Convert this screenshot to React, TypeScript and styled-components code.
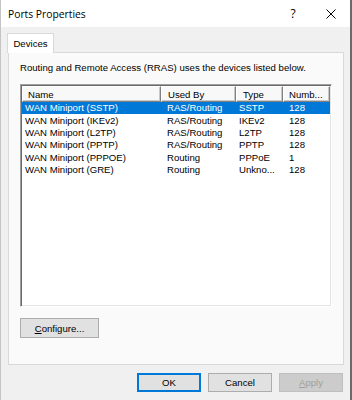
import React from "react";
import styled, { createGlobalStyle } from "styled-components";

const Global = createGlobalStyle`
  html, body { margin: 0; padding: 0; background: #f0f0f0; }
  * { box-sizing: border-box; }
`;

const Window = styled.div`
  width: 352px;
  height: 400px;
  background: #f0f0f0;
  display: flex;
  flex-direction: column;
  font-family: "Liberation Sans", Arial, sans-serif;
  font-size: 9.6px;
  color: #000;
  border-left: 1px solid #c4c4c4;
  border-right: 2px solid #6a6a6a;
  overflow: hidden;
`;

const TitleBar = styled.div`
  height: 27px;
  flex: none;
  background: #fff;
  display: flex;
  align-items: center;
  padding-left: 7px;
`;

const Title = styled.div`
  flex: 1;
  font-family: "Open Sans", "Noto Sans", sans-serif;
  font-size: 10.3px;
  color: #000;
`;

const TitleButton = styled.div`
  width: 38px;
  height: 27px;
  display: flex;
  align-items: center;
  justify-content: center;
  font-family: "Open Sans", "Noto Sans", sans-serif;
  font-size: 12px;
`;

const Body = styled.div`
  flex: 1;
  display: flex;
  flex-direction: column;
  padding: 6px 7px 0 6px;
`;

const TabStrip = styled.div`
  display: flex;
  height: 19px;
  position: relative;
  z-index: 1;
`;

const Tab = styled.div`
  width: 47px;
  height: 20px;
  background: #fff;
  border: 1px solid #d9d9d9;
  border-bottom: none;
  display: flex;
  align-items: center;
  justify-content: center;
  padding-bottom: 1px;
`;

const Panel = styled.div`
  margin-left: 1px;
  width: 336px;
  height: 313px;
  background: #fafafa;
  border: 1px solid #d9d9d9;
  display: flex;
  flex-direction: column;
  padding: 9px 0 0 11px;
`;

const Caption = styled.div`
  line-height: 12px;
  height: 12px;
`;

const ListView = styled.div`
  margin-top: 10px;
  width: 312px;
  height: 223px;
  background: #fff;
  border-top: 1px solid #a0a0a0;
  border-left: 1px solid #a0a0a0;
  border-right: 1px solid #fff;
  border-bottom: 1px solid #fff;
  box-shadow: inset 1px 1px 0 #696969, inset -1px -1px 0 #e3e3e3;
  padding: 1px;
  display: flex;
  flex-direction: column;
`;

const cols = "139px 75px 47px 47px";

const HeaderRow = styled.div`
  display: grid;
  grid-template-columns: ${cols};
  height: 16px;
`;

const HeaderCell = styled.div<{ $pad: number }>`
  background: #f8f8f8;
  border-top: 1px solid #fff;
  border-left: 1px solid #fff;
  border-right: 1px solid #808080;
  border-bottom: 1px solid #808080;
  box-shadow: inset -1px -1px 0 #c8c8c8;
  padding-left: ${(p) => p.$pad}px;
  display: flex;
  align-items: center;
  white-space: nowrap;
  overflow: hidden;
`;

const Row = styled.div<{ $selected?: boolean }>`
  display: grid;
  grid-template-columns: ${cols} 1fr;
  height: 12.4px;
  align-items: center;
  background: ${(p) => (p.$selected ? "#0078d7" : "transparent")};
  color: ${(p) => (p.$selected ? "#fff" : "#000")};
`;

const Cell = styled.div<{ $pad: number }>`
  padding-left: ${(p) => p.$pad}px;
  white-space: nowrap;
  overflow: hidden;
  line-height: 12px;
`;

const ConfigureButton = styled.div`
  margin-top: 11px;
  width: 79px;
  height: 20px;
  background: #e1e1e1;
  border: 1px solid #adadad;
  display: flex;
  align-items: center;
  justify-content: center;
`;

const Footer = styled.div`
  display: flex;
  justify-content: flex-end;
  gap: 7px;
  margin-top: 8px;
`;

const Button = styled.div<{ $default?: boolean; $disabled?: boolean }>`
  width: 64px;
  height: 19px;
  display: flex;
  align-items: center;
  justify-content: center;
  background: ${(p) => (p.$disabled ? "#cccccc" : "#e1e1e1")};
  color: ${(p) => (p.$disabled ? "#a0a0a0" : "#000")};
  border: ${(p) =>
    p.$default ? "2px solid #0078d7" : p.$disabled ? "1px solid #bfbfbf" : "1px solid #adadad"};
`;

const U = styled.span`
  text-decoration: underline;
`;

const rows = [
  ["WAN Miniport (SSTP)", "RAS/Routing", "SSTP", "128"],
  ["WAN Miniport (IKEv2)", "RAS/Routing", "IKEv2", "128"],
  ["WAN Miniport (L2TP)", "RAS/Routing", "L2TP", "128"],
  ["WAN Miniport (PPTP)", "RAS/Routing", "PPTP", "128"],
  ["WAN Miniport (PPPOE)", "Routing", "PPPoE", "1"],
  ["WAN Miniport (GRE)", "Routing", "Unkno...", "128"],
];

const headerPads = [5, 6, 6, 5];
const cellPads = [3, 6, 3, 6];

export default function App() {
  return (
    <>
      <Global />
      <Window>
        <TitleBar>
          <Title>Ports Properties</Title>
          <TitleButton>?</TitleButton>
          <TitleButton>
            <svg width="10" height="10" viewBox="0 0 10 10">
              <path d="M0.5 0.5 L9.5 9.5 M9.5 0.5 L0.5 9.5" stroke="#000" strokeWidth="1" fill="none" />
            </svg>
          </TitleButton>
        </TitleBar>
        <Body>
          <TabStrip>
            <Tab>Devices</Tab>
          </TabStrip>
          <Panel>
            <Caption>Routing and Remote Access (RRAS) uses the devices listed below.</Caption>
            <ListView>
              <HeaderRow>
                {["Name", "Used By", "Type", "Numb..."].map((h, i) => (
                  <HeaderCell key={h} $pad={headerPads[i]}>
                    {h}
                  </HeaderCell>
                ))}
              </HeaderRow>
              {rows.map((r, ri) => (
                <Row key={r[0]} $selected={ri === 0}>
                  {r.map((c, ci) => (
                    <Cell key={ci} $pad={cellPads[ci]}>
                      {c}
                    </Cell>
                  ))}
                </Row>
              ))}
            </ListView>
            <ConfigureButton>
              <span>
                <U>C</U>onfigure...
              </span>
            </ConfigureButton>
          </Panel>
          <Footer>
            <Button $default>OK</Button>
            <Button>Cancel</Button>
            <Button $disabled>
              <span>
                <U>A</U>pply
              </span>
            </Button>
          </Footer>
        </Body>
      </Window>
    </>
  );
}
